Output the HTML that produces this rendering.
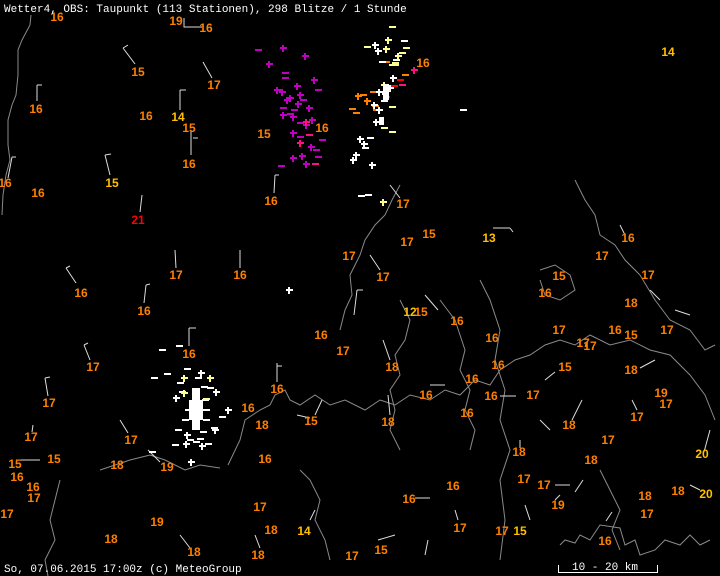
<!DOCTYPE html>
<html><head><meta charset="utf-8"><style>
html,body{margin:0;padding:0;background:#000;width:720px;height:576px;overflow:hidden}
svg{display:block}
.n{font:bold 12px "Liberation Sans",sans-serif;fill:#ff8000;text-anchor:middle}
.y{fill:#ffc000}.r{fill:#ff0000}
.t{font:11px "Liberation Mono",monospace;fill:#fff}
.c{fill:none;stroke:#8a8a8a;stroke-width:1}
.b{fill:none;stroke:#ddd;stroke-width:1}
</style></head><body>
<svg width="720" height="576" viewBox="0 0 720 576">
<defs>
<g id="p"><rect x="-3" y="-1" width="7" height="2"/><rect x="-1" y="-3" width="2" height="7"/></g>
<rect id="m" x="-3" y="-1" width="7" height="2"/>
</defs>
<rect width="720" height="576" fill="#000"/>
<polyline class="c" points="31,15 30,25 22,40 18,50 18,75 16,95 12,105 8,120 8,145 10,160 6,175 3,195 2,215"/>
<polyline class="c" points="228,465 240,440 245,420 260,410 270,405 275,395 285,390 290,400 300,405 315,395 330,405 345,400 365,410 380,400 395,405 410,395 430,400 445,390 460,395 475,380 490,385 500,370 515,360 530,355 545,345 560,340 575,345 590,335 610,345 630,340 650,350 670,355 690,375 705,395 715,420"/>
<polyline class="c" points="340,330 345,310 352,295 350,275 360,255 365,240 375,225 385,215 392,200 400,185"/>
<polyline class="c" points="400,300 410,320 405,340 395,355 400,375 390,390 395,410 390,430 400,450"/>
<polyline class="c" points="440,300 455,320 465,350 460,370 470,390 465,410 475,430 470,450"/>
<polyline class="c" points="575,180 585,200 595,215 600,235 615,245 625,260 640,275 655,300 670,320 690,330 705,350 715,345"/>
<polyline class="c" points="540,270 555,265 570,275 575,290 560,300 545,295 540,280"/>
<polyline class="c" points="300,470 310,480 320,500 315,520 325,540 330,560"/>
<polyline class="c" points="560,545 565,540 575,543 580,535 590,540 600,525 620,528 625,545 635,540 640,555 655,550 665,540 680,545 690,535 700,545 710,540"/>
<polyline class="c" points="480,280 490,300 500,330 495,360 505,390 500,420 510,450 500,480 505,520 500,560"/>
<polyline class="c" points="100,470 130,460 150,455 165,460 185,470 200,465 220,468"/>
<polyline class="c" points="60,480 55,500 50,520 55,540 45,560 48,576"/>
<polyline class="c" points="600,470 610,490 620,510 612,530 620,550"/>
<g class="b">
<path d="M123,48 L135,64 M123,48 L128,45"/><path d="M203,62 L212,78"/><path d="M180,90 L180,110 M180,90 L186,90"/>
<path d="M184,18 L184,27 L202,27"/><path d="M37,85 L37,101 M37,85 L42,85"/><path d="M191,130 L191,155 M193,138 L198,138"/>
<path d="M105,155 L110,175 M105,155 L111,154"/><path d="M12,157 L8,178 M12,157 L16,157"/><path d="M142,195 L140,212"/>
<path d="M275,175 L274,193 M275,175 L279,175"/><path d="M175,250 L176,268"/><path d="M240,250 L240,268"/>
<path d="M66,268 L76,283 M66,268 L70,266"/><path d="M146,285 L144,303 M146,285 L150,284"/><path d="M189,328 L189,346 M189,328 L196,328"/>
<path d="M84,345 L90,360 M84,345 L88,343"/><path d="M45,378 L48,396 M45,378 L50,377"/><path d="M277,363 L277,382 M277,366 L282,366"/>
<path d="M357,290 L354,315 M357,290 L363,290"/><path d="M370,255 L380,270"/><path d="M425,295 L438,310"/><path d="M390,185 L400,198"/>
<path d="M493,228 L510,228 M510,228 L513,232"/><path d="M322,400 L315,415"/><path d="M383,340 L390,360"/><path d="M388,395 L390,415"/>
<path d="M430,385 L445,385"/><path d="M500,396 L516,396"/><path d="M545,380 L555,372"/><path d="M582,400 L572,420"/><path d="M632,400 L637,410"/>
<path d="M120,420 L128,433"/><path d="M33,425 L32,432"/><path d="M20,460 L40,460"/><path d="M520,440 L520,448"/><path d="M555,485 L570,485"/>
<path d="M430,498 L415,498"/><path d="M455,510 L458,520"/><path d="M583,480 L575,492"/><path d="M555,500 L560,495"/><path d="M606,521 L612,512"/>
<path d="M525,505 L530,520"/><path d="M180,535 L190,548"/><path d="M310,520 L315,510"/><path d="M378,540 L395,535"/><path d="M428,540 L425,555"/>
<path d="M255,535 L260,548"/><path d="M675,310 L690,315"/><path d="M655,360 L640,368"/><path d="M710,430 L704,452"/><path d="M650,290 L660,300"/>
<path d="M700,490 L690,485"/><path d="M540,420 L550,430"/><path d="M620,225 L625,235"/><path d="M148,450 L160,462"/><path d="M297,415 L310,418"/>
</g>
<g fill="#c000c0">
<use href="#m" x="258" y="50"/><use href="#p" x="283" y="48"/><use href="#p" x="305" y="56"/><use href="#p" x="269" y="64"/><use href="#m" x="285" y="73"/>
<use href="#m" x="285" y="78"/><use href="#p" x="314" y="80"/><use href="#m" x="318" y="90"/><use href="#p" x="277" y="90"/><use href="#p" x="297" y="86"/>
<use href="#p" x="282" y="92"/><use href="#p" x="290" y="98"/><use href="#p" x="300" y="95"/><use href="#m" x="303" y="100"/><use href="#p" x="298" y="104"/>
<use href="#m" x="283" y="108"/><use href="#p" x="309" y="108"/><use href="#p" x="283" y="115"/><use href="#m" x="290" y="114"/><use href="#p" x="293" y="117"/>
<use href="#m" x="300" y="123"/><use href="#p" x="306" y="125"/><use href="#p" x="312" y="120"/><use href="#p" x="293" y="133"/><use href="#m" x="300" y="137"/>
<use href="#p" x="311" y="147"/><use href="#m" x="322" y="140"/><use href="#p" x="293" y="158"/><use href="#p" x="302" y="156"/><use href="#m" x="281" y="166"/>
<use href="#p" x="306" y="164"/><use href="#m" x="318" y="157"/><use href="#m" x="316" y="150"/><use href="#p" x="287" y="100"/><use href="#m" x="294" y="110"/>
</g>
<g fill="#ff1080"><use href="#p" x="306" y="122"/><use href="#p" x="300" y="143"/><use href="#m" x="309" y="135"/><use href="#m" x="315" y="164"/><use href="#p" x="414" y="70"/><use href="#m" x="402" y="85"/></g>
<g fill="#ffff90">
<use href="#m" x="392" y="27"/><use href="#p" x="388" y="40"/><use href="#m" x="367" y="47"/><use href="#p" x="386" y="49"/><use href="#p" x="398" y="56"/>
<use href="#m" x="402" y="53"/><use href="#m" x="395" y="63"/><use href="#m" x="395" y="65"/><use href="#m" x="392" y="65"/><use href="#p" x="384" y="85"/>
<use href="#m" x="392" y="107"/><use href="#m" x="392" y="132"/><use href="#m" x="370" y="138"/><use href="#m" x="384" y="128"/><use href="#p" x="383" y="202"/><use href="#m" x="406" y="48"/>
</g>
<g fill="#ff8000">
<use href="#m" x="386" y="62"/><use href="#m" x="405" y="75"/><use href="#p" x="358" y="96"/><use href="#m" x="363" y="95"/><use href="#p" x="367" y="101"/>
<use href="#m" x="352" y="109"/><use href="#m" x="356" y="113"/><use href="#m" x="375" y="106"/><use href="#m" x="376" y="110"/><use href="#m" x="373" y="92"/>
</g>
<g fill="#ff0000"><use href="#m" x="400" y="80"/><use href="#m" x="394" y="86"/><use href="#m" x="386" y="97"/></g>
<g fill="#fff">
<use href="#p" x="375" y="45"/><use href="#p" x="378" y="51"/><use href="#m" x="404" y="41"/><use href="#m" x="382" y="62"/><use href="#m" x="396" y="60"/>
<use href="#p" x="393" y="78"/><use href="#p" x="390" y="88"/><use href="#p" x="385" y="94"/><use href="#p" x="379" y="92"/><use href="#m" x="384" y="101"/>
<use href="#p" x="374" y="105"/><use href="#p" x="379" y="110"/><use href="#p" x="376" y="122"/><use href="#m" x="370" y="138"/><use href="#p" x="360" y="139"/>
<use href="#p" x="364" y="144"/><use href="#m" x="365" y="148"/><use href="#p" x="356" y="155"/><use href="#p" x="353" y="160"/><use href="#p" x="372" y="165"/>
<use href="#m" x="361" y="196"/><use href="#m" x="368" y="195"/><use href="#m" x="463" y="110"/>
<rect x="383" y="84" width="6" height="16"/><rect x="379" y="117" width="5" height="8"/>
<use href="#p" x="289" y="290"/>
</g>
<g fill="#fff">
<use href="#m" x="179" y="346"/><use href="#m" x="154" y="378"/><use href="#m" x="167" y="374"/><use href="#m" x="187" y="369"/><use href="#p" x="201" y="373"/>
<use href="#p" x="176" y="398"/><use href="#p" x="228" y="410"/><use href="#m" x="222" y="417"/><use href="#p" x="186" y="444"/><use href="#p" x="202" y="446"/>
<use href="#p" x="191" y="462"/><use href="#m" x="152" y="452"/><use href="#m" x="210" y="388"/><use href="#m" x="204" y="387"/><use href="#p" x="216" y="392"/>
<use href="#m" x="180" y="383"/><use href="#m" x="198" y="378"/><use href="#p" x="187" y="435"/><use href="#m" x="200" y="439"/><use href="#m" x="214" y="428"/>
<use href="#p" x="215" y="430"/><use href="#m" x="178" y="430"/><use href="#m" x="196" y="442"/><use href="#m" x="162" y="350"/>
<use href="#m" x="205" y="400"/><use href="#m" x="188" y="410"/><use href="#m" x="206" y="420"/><use href="#m" x="185" y="420"/><use href="#m" x="203" y="432"/>
<use href="#m" x="182" y="392"/><use href="#m" x="206" y="410"/><use href="#m" x="190" y="440"/><use href="#m" x="208" y="444"/><use href="#m" x="175" y="445"/>
<rect x="192" y="388" width="8" height="42"/><rect x="189" y="400" width="14" height="20"/>
</g>
<g fill="#ffff90"><use href="#p" x="184" y="378"/><use href="#p" x="210" y="378"/><use href="#p" x="184" y="393"/><use href="#m" x="206" y="399"/></g>
<g class="n">
<text x="57" y="21">16</text><text x="176" y="25" >19</text><text x="206" y="32">16</text><text x="138" y="76">15</text><text x="214" y="89">17</text>
<text x="36" y="113">16</text><text x="146" y="120">16</text><text x="178" y="121" class="n y">14</text><text x="189" y="132">15</text><text x="264" y="138">15</text>
<text x="322" y="132">16</text><text x="189" y="168">16</text><text x="112" y="187" class="n y">15</text><text x="5" y="187">16</text><text x="38" y="197">16</text>
<text x="271" y="205">16</text><text x="138" y="224" class="n r">21</text><text x="423" y="67">16</text><text x="668" y="56" class="n y">14</text>
<text x="403" y="208">17</text><text x="407" y="246">17</text><text x="429" y="238">15</text><text x="489" y="242" class="n y">13</text><text x="628" y="242">16</text>
<text x="602" y="260">17</text><text x="648" y="279">17</text><text x="349" y="260">17</text><text x="383" y="281">17</text><text x="176" y="279">17</text>
<text x="240" y="279">16</text><text x="81" y="297">16</text><text x="144" y="315">16</text><text x="559" y="280">15</text><text x="545" y="297">16</text>
<text x="631" y="307">18</text><text x="410" y="316" class="n y">12</text><text x="421" y="316">15</text><text x="321" y="339">16</text><text x="343" y="355">17</text>
<text x="457" y="325">16</text><text x="492" y="342">16</text><text x="559" y="334">17</text><text x="615" y="334">16</text><text x="631" y="339">15</text>
<text x="667" y="334">17</text><text x="583" y="347">17</text><text x="590" y="350">17</text><text x="189" y="358">16</text><text x="93" y="371">17</text>
<text x="392" y="371">18</text><text x="472" y="383">16</text><text x="498" y="369">16</text><text x="565" y="371">15</text><text x="631" y="374">18</text>
<text x="661" y="397">19</text><text x="666" y="408">17</text><text x="49" y="407">17</text><text x="277" y="393">16</text><text x="248" y="412">16</text>
<text x="426" y="399">16</text><text x="491" y="400">16</text><text x="533" y="399">17</text><text x="311" y="425">15</text><text x="262" y="429">18</text>
<text x="388" y="426">18</text><text x="467" y="417">16</text><text x="569" y="429">18</text><text x="637" y="421">17</text><text x="31" y="441">17</text>
<text x="131" y="444">17</text><text x="608" y="444">17</text><text x="15" y="468">15</text><text x="54" y="463">15</text><text x="117" y="469">18</text>
<text x="167" y="471">19</text><text x="265" y="463">16</text><text x="519" y="456">18</text><text x="591" y="464">18</text><text x="702" y="458" class="n y">20</text>
<text x="17" y="481">16</text><text x="33" y="491">16</text><text x="34" y="502">17</text><text x="453" y="490">16</text><text x="524" y="483">17</text>
<text x="544" y="489">17</text><text x="409" y="503">16</text><text x="558" y="509">19</text><text x="645" y="500">18</text><text x="678" y="495">18</text>
<text x="706" y="498" class="n y">20</text><text x="7" y="518">17</text><text x="260" y="511">17</text><text x="157" y="526">19</text><text x="647" y="518">17</text>
<text x="460" y="532">17</text><text x="271" y="534">18</text><text x="304" y="535" class="n y">14</text><text x="502" y="535">17</text><text x="520" y="535" class="n y">15</text>
<text x="111" y="543">18</text><text x="194" y="556">18</text><text x="258" y="559">18</text><text x="352" y="560">17</text><text x="381" y="554">15</text><text x="605" y="545">16</text>
</g>
<text class="t" x="4" y="12">Wetter4, OBS: Taupunkt (113 Stationen), 298 Blitze / 1 Stunde</text>
<text class="t" x="4" y="572">So, 07.06.2015 17:00z (c) MeteoGroup</text>
<path d="M558.5,565 L558.5,572.5 L657.5,572.5 L657.5,565" fill="none" stroke="#fff"/>
<text class="t" x="572" y="570">10 - 20 km</text>
</svg>
</body></html>
